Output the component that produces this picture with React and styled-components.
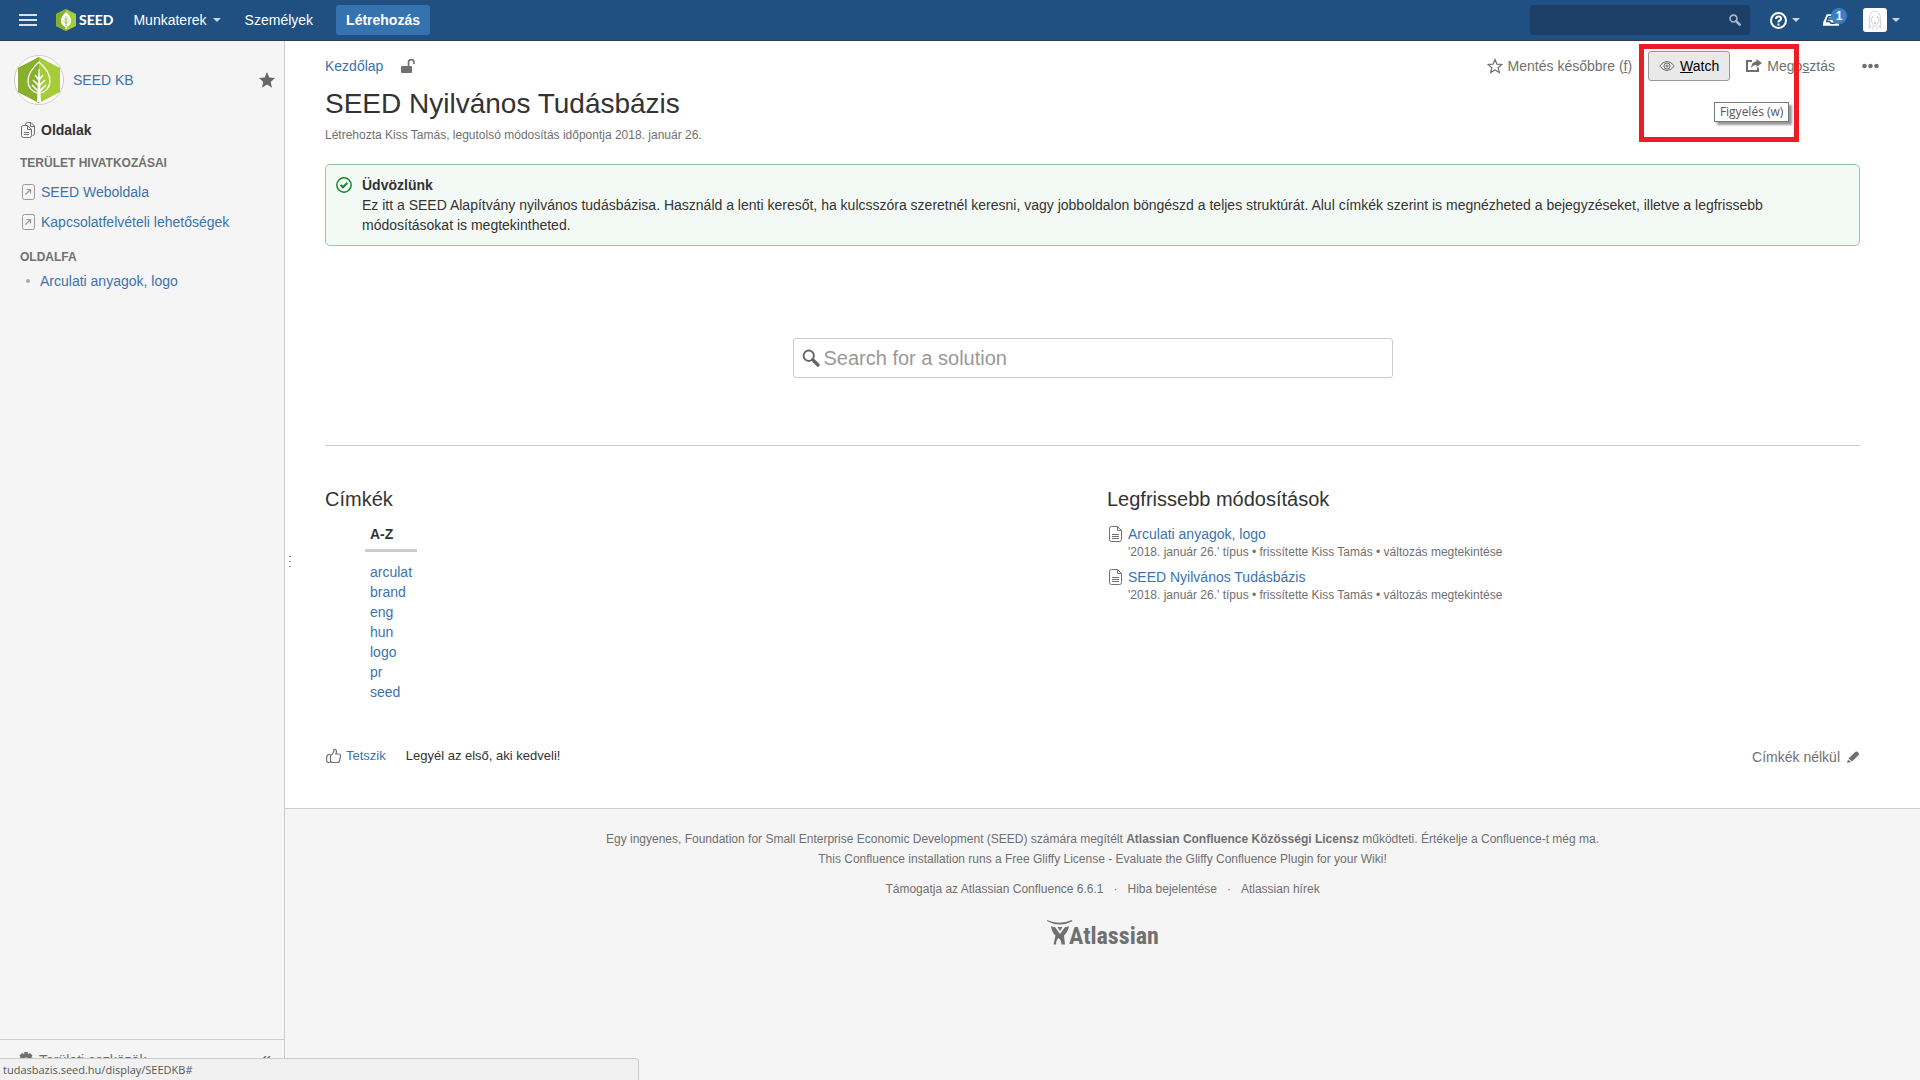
import React, { useState } from 'react';
import styled, { createGlobalStyle } from 'styled-components'

const GlobalStyle = createGlobalStyle`
    * {
        box-sizing: border-box;
    }
    body {
        margin: 0;
        background: #fff;
        color: #333;
        font-family: "Liberation Sans", Arial, sans-serif;
        font-size: 14px;
        line-height: 20px;
    }
    a {
        color: #3b73af;
        text-decoration: none;
    }
    button, input {
        font: inherit;
    }
    svg {
        display: block;
        flex: none;
    }
`
const Page = styled.div`
    min-height: 100vh;
    display: flex;
    flex-direction: column;
`
const Header = styled.header`
    height: 41px;
    padding: 0 20px 0 19px;
    display: flex;
    align-items: center;
    background: #205081;
    border-bottom: 1px solid #2e3d54;
    color: #fff;
`
const PlainButton = styled.button`
    border: 0;
    padding: 0;
    background: none;
    color: inherit;
    display: flex;
    align-items: center;
    cursor: pointer;
`
const Logo = styled.a`
    margin: 0 10px 0 19px;
    display: flex;
    align-items: center;
    gap: 3px;
    color: #fff;
    font-family: Lato, sans-serif;
    font-size: 14px;
    font-weight: 900;
`
const NavButton = styled(PlainButton)`
    padding: 0 11px 0 10px;
    gap: 6px;
`
const NavLink = styled.a`
    padding: 0 10px 0 13px;
    color: #fff;
`
const CreateButton = styled.button`
    height: 30px;
    margin-left: 13px;
    padding: 0 10px;
    border: 0;
    border-radius: 3px;
    background: #3572b0;
    color: #fff;
    font-weight: bold;
    cursor: pointer;
`
const QuickSearch = styled.label`
    width: 220px;
    height: 30px;
    margin-left: auto;
    padding: 0 9px 0 10px;
    display: flex;
    align-items: center;
    border-radius: 3px;
    background: #1b3f66;
`
const QuickInput = styled.input`
    flex: 1;
    min-width: 0;
    border: 0;
    outline: 0;
    background: transparent;
    color: #fff;
`
const HeaderIcons = styled.div`
    margin-left: 20px;
    display: flex;
    align-items: center;
    gap: 23px;
`
const IconButton = styled(PlainButton)`
    position: relative;
    gap: 5px;
`
const Badge = styled.span`
    position: absolute;
    left: 8px;
    top: -4px;
    width: 16px;
    height: 16px;
    border-radius: 8px;
    background: #3b7fc4;
    font-size: 12px;
    font-weight: bold;
    line-height: 16px;
    text-align: center;
`
const Body = styled.div`
    flex: 1;
    display: flex;
`
const Sidebar = styled.aside`
    width: 285px;
    flex: none;
    display: flex;
    flex-direction: column;
    background: #f5f5f5;
    border-right: 1px solid #ccc;
`
const SpaceHeader = styled.div`
    padding: 14px 8px 0 14px;
    display: flex;
    align-items: center;
    gap: 9px;
`
const SpaceStar = styled(PlainButton)`
    margin-left: auto;
    color: #666;
`
const SideLink = styled.a`
    height: 20px;
    margin: ${props => props.$top || 10}px 0 0 20px;
    display: flex;
    align-items: center;
    gap: 5px;
    color: ${props => props.$strong ? '#333' : '#3b73af'};
    font-weight: ${props => props.$strong ? 'bold' : 'normal'};
`
const SideTitle = styled.h5`
    margin: ${props => props.$top}px 0 0 20px;
    color: #707070;
    font-size: 12px;
    line-height: 20px;
    text-transform: uppercase;
`
const Tree = styled.ul`
    margin: 4px 0 0;
    padding: 0 0 0 26px;
    list-style: none;
`
const TreeItem = styled.li`
    display: flex;
    align-items: center;
    gap: 10px;

    &::before {
        content: '';
        width: 4px;
        height: 4px;
        border-radius: 2px;
        background: #aaa;
    }
`
const SpaceTools = styled.div`
    height: 41px;
    margin-top: auto;
    padding: 0 13px 0 18px;
    display: flex;
    align-items: center;
    justify-content: space-between;
    border-top: 1px solid #ccc;
    color: #707070;
`
const ToolsButton = styled(PlainButton)`
    gap: 5px;
`
const Main = styled.div`
    position: relative;
    flex: 1;
    min-width: 0;
    display: flex;
    flex-direction: column;
`
const Handle = styled.div`
    position: absolute;
    left: 4px;
    top: calc(50% - 5px);
    color: #888;
`
const Content = styled.main`
    padding: 10px 60px 42px 40px;
`
const TopRow = styled.div`
    height: 30px;
    margin-right: -30px;
    display: flex;
    align-items: center;
    justify-content: space-between;
`
const Breadcrumb = styled.nav`
    display: flex;
    align-items: center;
    gap: 18px;
    color: #707070;
`
const Toolbar = styled.div`
    display: flex;
    gap: 5px;
`
const ToolButton = styled.button`
    height: 30px;
    padding: 0 10px;
    display: flex;
    align-items: center;
    gap: 5px;
    border: 1px solid ${props => props.$active ? '#999' : 'transparent'};
    border-radius: 3px;
    background: ${props => props.$active ? '#e9e9e9' : 'transparent'};
    color: #707070;
    cursor: pointer;
`
const WatchLabel = styled.span`
    color: #000;
`
const WatchWrapper = styled.div`
    position: relative;
`
const Highlight = styled.div`
    position: absolute;
    z-index: 1;
    left: -9px;
    top: -7px;
    width: 160px;
    height: 98px;
    border: 5px solid #ed1c24;
    pointer-events: none;
`
const Tooltip = styled.div`
    position: absolute;
    z-index: 2;
    left: 66px;
    top: 51px;
    width: 75px;
    height: 20px;
    border: 1px solid #767676;
    background: #fff;
    box-shadow: 3px 3px 2px rgba(0, 0, 0, 0.4);
    color: #575757;
    font-family: "Open Sans", "Noto Sans", sans-serif;
    font-size: 12px;
    line-height: 17px;
    text-align: center;
    white-space: nowrap;
`
const Title = styled.h1`
    margin: 7px 0 5px;
    font-size: 28px;
    font-weight: normal;
    line-height: 32px;
`
const Meta = styled.div`
    color: #707070;
    font-size: 12px;
`
const Welcome = styled.section`
    margin-top: 19px;
    padding: 10px;
    display: flex;
    gap: 10px;
    border: 1px solid #91c89c;
    border-radius: 5px;
    background: #f3f9f4;
`
const WelcomeIcon = styled.div`
    padding-top: 2px;
    color: #14892c;
`
const WelcomeText = styled.p`
    margin: 0;
    padding-right: 10px;
`
const SearchBox = styled.label`
    max-width: 600px;
    height: 40px;
    margin: 92px auto 67px;
    padding: 0 8px;
    display: flex;
    align-items: center;
    gap: 4px;
    border: 1px solid #ccc;
    border-radius: 3px;
    color: #666;
`
const SearchInput = styled.input`
    flex: 1;
    min-width: 0;
    padding: 0;
    border: 0;
    outline: 0;
    font-size: 20px;

    &::placeholder {
        color: #999;
        opacity: 1;
    }
`
const Columns = styled.div`
    padding-top: 38px;
    display: grid;
    grid-template-columns: 1fr 1fr;
    gap: 29px;
    border-top: 1px solid #ccc;
`
const ColumnTitle = styled.h2`
    margin: 0 0 10px;
    font-size: 20px;
    font-weight: normal;
    line-height: 30px;
`
const LabelTab = styled.div`
    width: 52px;
    margin-left: 40px;
    padding: 0 5px 5px;
    border-bottom: 3px solid #ccc;
    font-weight: bold;
`
const LabelList = styled.ul`
    margin: 10px 0 0 45px;
    padding: 0;
    list-style: none;
`
const Update = styled.div`
    margin-bottom: 6px;
    padding-left: 1px;
    display: flex;
    gap: 5px;
    color: #707070;
`
const UpdateIcon = styled.div`
    padding-top: 2px;
`
const UpdateMeta = styled.div`
    font-size: 12px;
    line-height: 17px;

    a {
        color: inherit;
    }
`
const LikeRow = styled.div`
    height: 20px;
    margin-top: 44px;
    display: flex;
    align-items: flex-start;
    font-size: 13px;
`
const LikeButton = styled(PlainButton)`
    gap: 5px;
    margin-right: 20px;
    color: #3b73af;
`
const NoLabels = styled(PlainButton)`
    margin-left: auto;
    padding-top: 1px;
    gap: 7px;
    color: #707070;
    font-size: 14px;
`
const Footer = styled.footer`
    flex: 1;
    padding-top: 20px;
    background: #f5f5f5;
    border-top: 1px solid #ccc;
    color: #707070;
    font-size: 12px;
    text-align: center;

    a {
        color: inherit;
    }
`
const FooterLinks = styled.div`
    margin: 10px 0 21px;
    display: flex;
    justify-content: center;
    gap: 10px;
`
const FooterLogo = styled.a`
    display: inline-block;
`
const StatusBar = styled.div`
    position: fixed;
    left: 0;
    bottom: 0;
    width: 639px;
    height: 22px;
    padding-left: 3px;
    border: 1px solid #ccc;
    border-width: 1px 1px 0 0;
    border-radius: 0 4px 0 0;
    background: #f1f1f1;
    color: #575757;
    font-family: "Open Sans", "Noto Sans", sans-serif;
    font-size: 11px;
    line-height: 21px;
`

const labels = ['arculat', 'brand', 'eng', 'hun', 'logo', 'pr', 'seed']
const updates = ['Arculati anyagok, logo', 'SEED Nyilvános Tudásbázis']

function SeedMark({ width, height }) {
    return (
        <svg width={width} height={height} viewBox="0 0 42 46">
            <path d="M21 0 42 11v24L21 46 0 35V11z" fill="#a4cd39" />
            <path d="M21 0v46L0 35V11z" fill="#87b02e" />
            <path d="M21 5c-8 7-11 13-11 19 0 7 5 11 11 13 6-2 11-6 11-13 0-6-3-12-11-19z" fill="none" stroke="#fff" strokeWidth="1.3" />
            <path d="M20.5 12h1L23 45h-4z" fill="#fff" />
            <path d="M21 23l-4-5M21 23l4-5M21 29l-6-6M21 29l6-6M21 35l-7-7M21 35l7-7" stroke="#fff" strokeWidth="1.5" fill="none" />
        </svg>
    )
}

function SmallSeedMark() {
    return (
        <svg width="20" height="22" viewBox="0 0 20 22">
            <path d="M10 0l10 5v12l-10 5L0 17V5z" fill="#a4cd39" />
            <path d="M10 0v22L0 17V5z" fill="#87b02e" />
            <path d="M10 3c-3.5 3-5 5.5-5 9 0 3 2 5 4.3 6v2h1.4v-2c2.3-1 4.3-3 4.3-6 0-3.5-1.5-6-5-9z" fill="#fff" />
            <path d="M10 7v10M10 11.5L8 9.5M10 11.5l2-2M10 14.5l-3-3M10 14.5l3-3" stroke="#87b02e" strokeWidth=".8" fill="none" />
        </svg>
    )
}

function SpaceLogo() {
    return (
        <svg width="50" height="50" viewBox="0 0 50 50">
            <circle cx="25" cy="25" r="24.5" fill="#fff" stroke="#ccc" />
            <svg x="4" y="2">
                <SeedMark width="42" height="46" />
            </svg>
        </svg>
    )
}

function Caret() {
    return <svg width="8" height="4"><path d="M0 0h8L4 4z" fill="#c9d5e2" /></svg>
}

function Magnifier({ size, color, thick }) {
    return (
        <svg width={size} height={size} viewBox="0 0 16 16" fill="none" stroke={color}>
            <circle cx="6" cy="6" r="4.6" strokeWidth={thick} />
            <path d="M9.5 9.5l4.7 4.7" strokeWidth={thick + 1.3} strokeLinecap="round" />
        </svg>
    )
}

function LinkIcon() {
    return (
        <svg width="16" height="16" fill="none" stroke="#999">
            <rect x="2.5" y=".5" width="12" height="15" rx="2" />
            <path d="M5.5 10.5l5-5M6.5 5.5h4v4" strokeWidth="1.2" />
        </svg>
    )
}

function PagesIcon() {
    return (
        <svg width="16" height="16" fill="none" stroke="#707070">
            <path d="M3.5 3.5h4l4 4v6q0 2-2 2h-6q-2 0-2-2v-8q0-2 2-2z" />
            <path d="M7.5 3.5v4h4M4 10.5h5M4 12.5h5" />
            <path d="M5.5 3V2.5q0-2 2-2H11l3.5 3.5v7.5q0 2-2 2M10.5 1v3.5h4" />
        </svg>
    )
}

function PageIcon() {
    return (
        <svg width="15" height="16" fill="none" stroke="#707070">
            <path d="M3.5.5h6l4 4v9q0 2-2 2h-8q-2 0-2-2v-11q0-2 2-2z" />
            <path d="M9.5.5v4h4M4 8.5h7M4 10.5h7M4 12.5h7" />
        </svg>
    )
}

function AtlassianLogo() {
    return (
        <svg width="111" height="32" fill="#707070" overflow="visible" role="img" aria-label="Atlassian">
            <path d="M0 0q12 5.5 25 0l.3 1.2Q13 8 .3 1.2z" />
            <path d="M4 6q2 1.500 4 1l5 7 5-7q2 .5 4-1-1 6-5 9.500l1 9h-3.500q0-4.500-3-6.500-2.500 2-2.500 6.500H6.500l2-9Q4.500 12 4 6z" />
            <path d="M10.5 7h5L13 11z" />
            <text x="22" y="24" fontFamily="'Liberation Sans Narrow', 'Arial Narrow', 'Roboto Condensed', sans-serif" fontSize="24" fontWeight="bold">Atlassian</text>
        </svg>
    )
}

function App() {
    const [query, setQuery] = useState('')
    const [quickQuery, setQuickQuery] = useState('')

    return (
        <Page>
            <GlobalStyle />
            <Header>
                <PlainButton aria-label="Menü">
                    <svg width="18" height="14" fill="#d9e2eb">
                        <path d="M0 1h18v2H0zM0 6h18v2H0zM0 11h18v2H0z" />
                    </svg>
                </PlainButton>
                <Logo href="#">
                    <SmallSeedMark />
                    SEED
                </Logo>
                <NavButton>Munkaterek <Caret /></NavButton>
                <NavLink href="#">Személyek</NavLink>
                <CreateButton>Létrehozás</CreateButton>
                <QuickSearch>
                    <QuickInput aria-label="Keresés" value={quickQuery} onChange={e => setQuickQuery(e.target.value)} />
                    <Magnifier size={12} color="#a9b8c8" thick={2.2} />
                </QuickSearch>
                <HeaderIcons>
                    <IconButton aria-label="Súgó">
                        <svg width="17" height="17" fill="none" stroke="#fff" strokeWidth="2">
                            <circle cx="8.5" cy="8.5" r="7.5" />
                            <path d="M6 7q0-2.500 2.500-2.500T11 6.800q0 1-1.300 1.700T8.500 10.300" />
                            <path d="M8.5 11.5v2" />
                        </svg>
                        <Caret />
                    </IconButton>
                    <IconButton aria-label="Értesítések">
                        <svg width="17" height="16" viewBox="0 0 18 16">
                            <path d="M4 2h10l3 9v3H0v-3z" fill="#fff" />
                            <path d="M5.5 4.5H10M5 7h5M5.500 4.500L4 9.500h3l1.500 2h4l1-2" stroke="#205081" strokeWidth="1.5" fill="none" />
                        </svg>
                        <Badge>1</Badge>
                    </IconButton>
                    <IconButton aria-label="Profil">
                        <svg width="24" height="24" fill="none" stroke="#d4d4d4">
                            <rect width="24" height="24" rx="3" fill="#fff" stroke="none" />
                            <path d="M8 20Q4 12 8 5q4-4 8 0 4 7 0 15M8 9q0 7 4 9 4-2 4-9M7 12l-1 9M17 12l1 9M10 18v4M14 18v4" />
                            <path d="M9 9h1M14 9h1M11 15h2" stroke="#999" />
                        </svg>
                        <Caret />
                    </IconButton>
                </HeaderIcons>
            </Header>

            <Body>
                <Sidebar>
                    <SpaceHeader>
                        <SpaceLogo />
                        <a href="#">SEED KB</a>
                        <SpaceStar aria-label="Kedvenc">
                            <svg width="18" height="16" viewBox="0 0 18 16" fill="currentColor">
                                <path d="M9 0l2.3 5.5 5.7.5-4.3 3.9L14 15.700l-5-3.200-5 3.200 1.300-5.800L1 6l5.700-.5z" />
                            </svg>
                        </SpaceStar>
                    </SpaceHeader>
                    <SideLink href="#" $strong $top={15}><PagesIcon /> Oldalak</SideLink>
                    <SideTitle $top={13}>Terület hivatkozásai</SideTitle>
                    <SideLink href="#" $top={9}><LinkIcon /> SEED Weboldala</SideLink>
                    <SideLink href="#"><LinkIcon /> Kapcsolatfelvételi lehetőségek</SideLink>
                    <SideTitle $top={15}>Oldalfa</SideTitle>
                    <Tree>
                        <TreeItem><a href="#">Arculati anyagok, logo</a></TreeItem>
                    </Tree>
                    <SpaceTools>
                        <ToolsButton>
                            <svg width="16" height="16" viewBox="0 0 16 16" fill="currentColor">
                                <path d="M6.5 0h3l.5 2.3 2-1.2L14.5 3.5l-1.2 2 2.7.8v3.4l-2.7.6 1.2 2-2.5 2.4-2-1.2-.5 2.5h-3L6 13.500l-2 1.200-2.500-2.400 1.200-2L0 9.700V6.300l2.700-.8-1.200-2L4 1.100l2 1.200zM8 5.500a2.500 2.500 0 1 0 0 5 2.500 2.500 0 0 0 0-5z" />
                            </svg>
                            Területi eszközök
                        </ToolsButton>
                        <PlainButton aria-label="Oldalsáv bezárása">
                            <svg width="10" height="8" fill="none" stroke="currentColor" strokeWidth="1.5">
                                <path d="M5 0L1 4l4 4M9 0L5 4l4 4" />
                            </svg>
                        </PlainButton>
                    </SpaceTools>
                </Sidebar>

                <Main>
                    <Handle>
                        <svg width="2" height="11" fill="currentColor"><path d="M0 0h2v1H0zM0 5h2v1H0zM0 10h2v1H0z" /></svg>
                    </Handle>
                    <Content>
                        <TopRow>
                            <Breadcrumb>
                                <a href="#">Kezdőlap</a>
                                <svg width="14" height="14" fill="currentColor">
                                    <rect y="7" width="11" height="7" rx="1" />
                                    <path d="M7.5 7V3.5a2.7 2.7 0 0 1 5.5 0v1.5" fill="none" stroke="currentColor" strokeWidth="1.6" />
                                </svg>
                            </Breadcrumb>
                            <Toolbar>
                                <ToolButton>
                                    <svg width="16" height="16" fill="none" stroke="currentColor" strokeWidth="1.2">
                                        <path d="M8 1.5l1.9 4.6 5 .4-3.8 3.2 1.2 4.9L8 12l-4.3 2.6 1.2-4.9L1.1 6.5l5-.4z" />
                                    </svg>
                                    <span>Mentés későbbre (<u>f</u>)</span>
                                </ToolButton>
                                <WatchWrapper>
                                    <ToolButton $active>
                                        <svg width="16" height="16" fill="none" stroke="currentColor">
                                            <path d="M.7 8Q4 3.5 8 3.5T15.3 8Q12 12.5 8 12.5T.7 8z" />
                                            <circle cx="8" cy="8" r="3" />
                                            <circle cx="8" cy="8" r="1" />
                                        </svg>
                                        <WatchLabel><u>W</u>atch</WatchLabel>
                                    </ToolButton>
                                    <Highlight />
                                    <Tooltip role="tooltip">Figyelés (w)</Tooltip>
                                </WatchWrapper>
                                <ToolButton>
                                    <svg width="16" height="16" fill="none" stroke="currentColor">
                                        <path d="M6 3H1v10h11V9.5" strokeWidth="2" />
                                        <path d="M10.5 1L16 5l-5.5 4V7Q7 7 5 10q.3-6 5.5-6.8z" fill="currentColor" stroke="none" />
                                    </svg>
                                    <span>Mego<u>s</u>ztás</span>
                                </ToolButton>
                                <ToolButton aria-label="Továbbiak">
                                    <svg width="17" height="6" fill="currentColor">
                                        <circle cx="2.5" cy="3" r="2.3" />
                                        <circle cx="8.5" cy="3" r="2.3" />
                                        <circle cx="14.5" cy="3" r="2.3" />
                                    </svg>
                                </ToolButton>
                            </Toolbar>
                        </TopRow>
                        <Title>SEED Nyilvános Tudásbázis</Title>
                        <Meta>Létrehozta Kiss Tamás, legutolsó módosítás időpontja 2018. január 26.</Meta>

                        <Welcome>
                            <WelcomeIcon>
                                <svg width="16" height="16" fill="none" stroke="currentColor">
                                    <circle cx="8" cy="8" r="7.2" strokeWidth="1.5" />
                                    <path d="M4.7 8l2.3 2.3 4.3-4.3" strokeWidth="2" />
                                </svg>
                            </WelcomeIcon>
                            <WelcomeText>
                                <strong>Üdvözlünk</strong><br />
                                Ez itt a SEED Alapítvány nyilvános tudásbázisa. Használd a lenti keresőt, ha kulcsszóra szeretnél keresni, vagy jobboldalon böngészd a teljes struktúrát. Alul címkék szerint is megnézheted a bejegyzéseket, illetve a legfrissebb módosításokat is megtekintheted.
                            </WelcomeText>
                        </Welcome>

                        <SearchBox>
                            <Magnifier size={18} color="currentColor" thick={1.7} />
                            <SearchInput placeholder="Search for a solution" aria-label="Search for a solution" value={query} onChange={e => setQuery(e.target.value)} />
                        </SearchBox>

                        <Columns>
                            <section>
                                <ColumnTitle>Címkék</ColumnTitle>
                                <LabelTab>A-Z</LabelTab>
                                <LabelList>
                                    {labels.map(label => <li key={label}><a href="#">{label}</a></li>)}
                                </LabelList>
                            </section>
                            <section>
                                <ColumnTitle>Legfrissebb módosítások</ColumnTitle>
                                {updates.map(title => (
                                    <Update key={title}>
                                        <UpdateIcon><PageIcon /></UpdateIcon>
                                        <div>
                                            <a href="#">{title}</a>
                                            <UpdateMeta>
                                                '2018. január 26.' típus • frissítette <a href="#">Kiss Tamás</a> • <a href="#">változás megtekintése</a>
                                            </UpdateMeta>
                                        </div>
                                    </Update>
                                ))}
                            </section>
                        </Columns>

                        <LikeRow>
                            <LikeButton>
                                <svg width="16" height="16" fill="none" stroke="#707070" strokeWidth="1.2">
                                    <path d="M5.5 7.5Q9 5.5 9 1.5q2.500-.5 2.500 2 0 1.300-.7 2.500H14q1.700.3 1.500 2l-1 5q-.4 1.500-2 1.500H8q-1.500 0-2.500-1z" />
                                    <path d="M5.5 6.5H3.5Q1.5 7.5 1.5 11q0 3 1.5 3.5h2.5" />
                                </svg>
                                Tetszik
                            </LikeButton>
                            <span>Legyél az első, aki kedveli!</span>
                            <NoLabels>
                                Címkék nélkül
                                <svg width="13" height="12" viewBox="0 0 13 12" fill="currentColor">
                                    <path d="M1.5 7.5L8.5.8q1-.8 2 0l1.200 1.200q.8 1 0 1.900L5 10.500zM1 8.500L4 11l-4 1z" />
                                </svg>
                            </NoLabels>
                        </LikeRow>
                    </Content>

                    <Footer>
                        <div>
                            Egy ingyenes, Foundation for Small Enterprise Economic Development (SEED) számára megítélt <strong>Atlassian Confluence Közösségi Licensz</strong> működteti. Értékelje a Confluence-t még ma.
                        </div>
                        <div>This Confluence installation runs a Free Gliffy License - Evaluate the Gliffy Confluence Plugin for your Wiki!</div>
                        <FooterLinks>
                            <span>Támogatja az <a href="#">Atlassian Confluence</a> 6.6.1</span>
                            <span>·</span>
                            <a href="#">Hiba bejelentése</a>
                            <span>·</span>
                            <a href="#">Atlassian hírek</a>
                        </FooterLinks>
                        <FooterLogo href="#"><AtlassianLogo /></FooterLogo>
                    </Footer>
                </Main>
            </Body>
            <StatusBar>tudasbazis.seed.hu/display/SEEDKB#</StatusBar>
        </Page>
    );
}

export default App;
